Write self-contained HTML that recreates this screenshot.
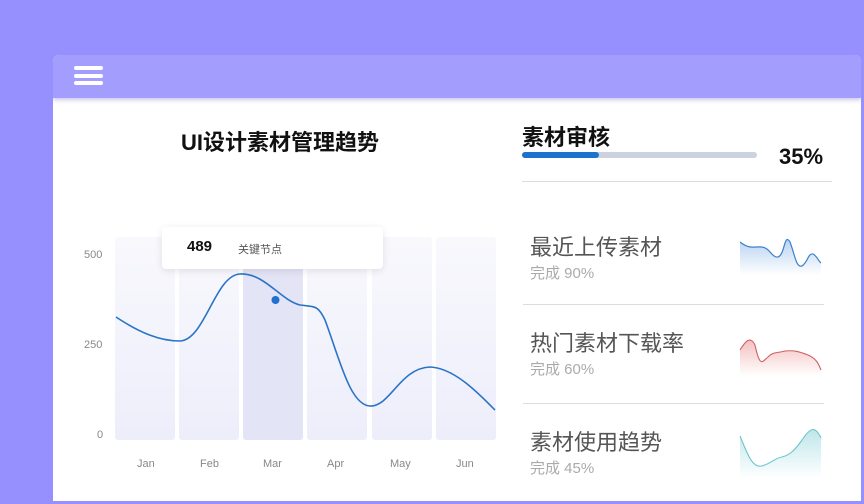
<!DOCTYPE html>
<html><head><meta charset="utf-8"><style>
*{margin:0;padding:0;box-sizing:border-box}
body{width:864px;height:504px;background:#9590fd;position:relative;overflow:hidden;font-family:"Liberation Sans","Noto Sans CJK SC",sans-serif}
.card{position:absolute;left:53px;top:55px;width:808px;height:446px;background:#fff;border-radius:6px 6px 0 0;overflow:hidden}
.hdr{height:43px;background:#a39efd;box-shadow:0 2px 4px rgba(80,70,200,.3);position:relative}
.bar{position:absolute;left:21px;width:29px;height:4px;background:#fff;border-radius:2px}
.t{position:absolute;white-space:nowrap}
.ax{font-size:11px;color:#888}
.sep{position:absolute;height:1px;background:#ddd}
</style></head><body>
<div class="card">
<div class="hdr"><div class="bar" style="top:11px"></div><div class="bar" style="top:19px"></div><div class="bar" style="top:26px"></div></div>
</div>
<div class="t" style="left:181px;top:125px;font-size:22px;font-weight:bold;color:#111">UI设计素材管理趋势</div>
<svg style="position:absolute;left:0;top:0" width="864" height="504">
<defs><linearGradient id="bg" x1="0" y1="0" x2="0" y2="1"><stop offset="0" stop-color="#f8f8fd"/><stop offset="1" stop-color="#eeeefb"/></linearGradient>
<linearGradient id="g1" x1="0" y1="0" x2="0" y2="1"><stop offset="0" stop-color="#b9d3f2"/><stop offset="1" stop-color="#fff"/></linearGradient>
<linearGradient id="g2" x1="0" y1="0" x2="0" y2="1"><stop offset="0" stop-color="#f4c0c0"/><stop offset="1" stop-color="#fff"/></linearGradient>
<linearGradient id="g3" x1="0" y1="0" x2="0" y2="1"><stop offset="0" stop-color="#bfe6ea"/><stop offset="1" stop-color="#fff"/></linearGradient></defs>
<rect x="115" y="237" width="60" height="203" rx="3" fill="url(#bg)"/>
<rect x="179" y="237" width="60" height="203" rx="3" fill="url(#bg)"/>
<rect x="243" y="237" width="60" height="203" rx="3" fill="#e3e4f6"/>
<rect x="307" y="237" width="60" height="203" rx="3" fill="url(#bg)"/>
<rect x="372" y="237" width="60" height="203" rx="3" fill="url(#bg)"/>
<rect x="436" y="237" width="60" height="203" rx="3" fill="url(#bg)"/>
<path d="M116,317 C140,333 160,341 180,341 C205,340 215,275 240,274 C265,273 280,300 300,305 C315,307 318,305 325,320 C340,360 350,405 370,406 C390,407 400,368 430,367 C455,368 480,395 495,410" fill="none" stroke="#2a74c8" stroke-width="1.6"/>
<circle cx="275.5" cy="300" r="4" fill="#1f70d0"/>
<rect x="522" y="152" width="235" height="6" rx="3" fill="#cdd3de"/>
<rect x="522" y="152" width="77" height="6" rx="3" fill="#1c72cc"/>
<path d="M740,242 C750,250 755,246 762,247 C770,248 772,258 778,257 C785,255 784,232 790,242 C795,255 796,268 802,266 C808,262 808,253 813,254 C817,256 819,262 821,263 L821,275 L740,275Z" fill="url(#g1)"/>
<path d="M740,242 C750,250 755,246 762,247 C770,248 772,258 778,257 C785,255 784,232 790,242 C795,255 796,268 802,266 C808,262 808,253 813,254 C817,256 819,262 821,263" fill="none" stroke="#3a82cc" stroke-width="1.2"/>
<path d="M740,350 C745,342 750,335 755,345 C760,368 762,362 768,357 C772,352 778,353 785,351 C795,350 800,352 808,355 C815,358 818,362 821,370 L821,376 L740,376Z" fill="url(#g2)"/>
<path d="M740,350 C745,342 750,335 755,345 C760,368 762,362 768,357 C772,352 778,353 785,351 C795,350 800,352 808,355 C815,358 818,362 821,370" fill="none" stroke="#d06060" stroke-width="1.1"/>
<path d="M740,436 C748,455 752,468 762,466 C772,463 775,458 782,457 C790,455 795,450 802,440 C810,428 815,425 821,438 L821,478 L740,478Z" fill="url(#g3)"/>
<path d="M740,436 C748,455 752,468 762,466 C772,463 775,458 782,457 C790,455 795,450 802,440 C810,428 815,425 821,438" fill="none" stroke="#6cc6cc" stroke-width="1.1"/>
</svg>
<div class="t" style="left:162px;top:227px;width:221px;height:42px;background:#fff;border-radius:4px;box-shadow:0 2px 8px rgba(0,0,0,.1)"></div>
<div class="t" style="left:187px;top:238px;font-size:15px;font-weight:bold;color:#111">489</div>
<div class="t" style="left:238px;top:241px;font-size:11px;color:#555">关键节点</div>
<div class="t ax" style="left:84px;top:249px">500</div>
<div class="t ax" style="left:84px;top:339px">250</div>
<div class="t ax" style="left:97px;top:429px">0</div>
<div class="t ax" style="left:137px;top:458px">Jan</div>
<div class="t ax" style="left:200px;top:458px">Feb</div>
<div class="t ax" style="left:263px;top:458px">Mar</div>
<div class="t ax" style="left:327px;top:458px">Apr</div>
<div class="t ax" style="left:390px;top:458px">May</div>
<div class="t ax" style="left:456px;top:458px">Jun</div>
<div class="t" style="left:522px;top:120px;font-size:22px;font-weight:bold;color:#111">素材审核</div>
<div class="t" style="left:779px;top:144px;font-size:22px;font-weight:bold;color:#111">35%</div>
<div class="sep" style="left:522px;top:181px;width:310px"></div>
<div class="t" style="left:530px;top:230px;font-size:22px;color:#555">最近上传素材</div>
<div class="t" style="left:530px;top:262px;font-size:15px;color:#aaa">完成 90%</div>
<div class="sep" style="left:523px;top:304px;width:301px"></div>
<div class="t" style="left:530px;top:326px;font-size:22px;color:#555">热门素材下载率</div>
<div class="t" style="left:530px;top:358px;font-size:15px;color:#aaa">完成 60%</div>
<div class="sep" style="left:523px;top:403px;width:301px"></div>
<div class="t" style="left:530px;top:425px;font-size:22px;color:#555">素材使用趋势</div>
<div class="t" style="left:530px;top:457px;font-size:15px;color:#aaa">完成 45%</div>
</body></html>
